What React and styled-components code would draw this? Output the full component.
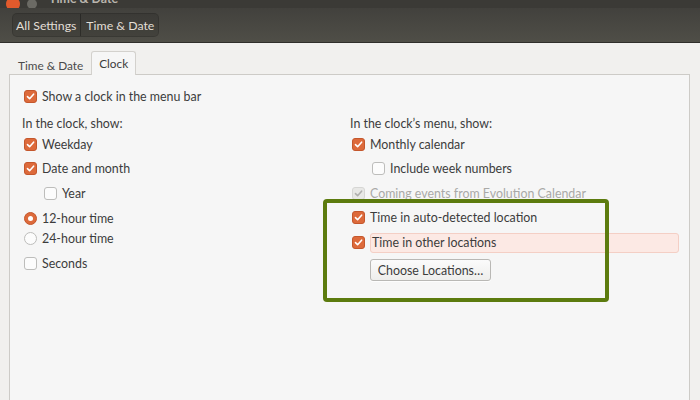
import styled, { createGlobalStyle } from 'styled-components';

const GlobalStyle = createGlobalStyle`
  html, body {
    margin: 0;
    padding: 0;
    background: #f1f0ee;
  }
  body {
    font-family: Lato, "Open Sans", "DejaVu Sans", sans-serif;
    font-size: 12.4px;
    color: #3c3c3c;
  }
`;

const Window = styled.div`
  position: relative;
  width: 700px;
  height: 400px;
  overflow: hidden;
  display: flex;
  flex-direction: column;
  background: #f1f0ee;
`;

const TitleBar = styled.div`
  height: 8px;
  background: #3b3a36;
  display: flex;
  align-items: flex-end;
  gap: 7px;
  padding-left: 6px;
  overflow: hidden;
`;

const WindowDot = styled.span`
  flex: none;
  width: ${props => props.$size}px;
  height: ${props => props.$size}px;
  border-radius: 50%;
  margin-bottom: ${props => props.$drop}px;
  background: ${props => props.$color};
`;

const WindowTitle = styled.span`
  margin-left: 5px;
  margin-bottom: 3px;
  line-height: 12px;
  font-size: 12.4px;
  font-weight: 700;
  color: #b9b5ad;
`;

const HeaderBar = styled.div`
  height: 34px;
  flex: none;
  display: flex;
  align-items: center;
  padding-left: 13px;
  background: linear-gradient(#42413d, #4f4e47);
  border-bottom: 1px solid #2f2e2a;
`;

const Crumbs = styled.div`
  display: flex;
  height: 22px;
  border-radius: 4px;
  background: rgba(0, 0, 0, 0.12);
  box-shadow: 0 0 0 1px rgba(0, 0, 0, 0.25);
`;

const Crumb = styled.span`
  display: flex;
  align-items: center;
  padding: 0 4px 0 ${props => (props.$last ? 5 : 3)}px;
  font-size: 12.3px;
  color: #e2ded6;
  border-left: ${props => (props.$last ? '1px solid rgba(0,0,0,0.3)' : 'none')};
`;

const Body = styled.div`
  flex: 1;
  display: flex;
  flex-direction: column;
  padding: 9px 10px 0 9px;
`;

const Tabs = styled.div`
  display: flex;
  align-items: flex-end;
  height: 22px;
  padding-left: 1px;
`;

const Tab = styled.div`
  display: flex;
  align-items: center;
  height: ${props => (props.$active ? 23 : 20)}px;
  padding: 0 7px;
  font-size: 11.8px;
  color: ${props => (props.$active ? '#3c3c3c' : '#4a4a4a')};
  background: ${props => (props.$active ? '#f6f6f6' : 'transparent')};
  border: 1px solid ${props => (props.$active ? '#d3d1cd' : 'transparent')};
  border-bottom: none;
  border-radius: 3px 3px 0 0;
  margin-bottom: -1px;
  position: relative;
  z-index: 1;
`;

const Panel = styled.div`
  flex: 1;
  background: #f6f6f6;
  border: 1px solid #cdcbc7;
  border-bottom: none;
  padding: 9px 0 0 12px;
`;

const Columns = styled.div`
  display: grid;
  grid-template-columns: 328px 1fr;
`;

const Column = styled.div`
  display: flex;
  flex-direction: column;
`;

const Row = styled.div`
  display: flex;
  align-items: center;
  gap: 5px;
  height: ${props => props.$h || 24}px;
  margin-top: ${props => props.$mt || 0}px;
  padding-left: ${props => (props.$indent ? 22 : 2)}px;
  color: ${props => (props.$disabled ? '#a9a9a7' : '#3c3c3c')};
`;

const SectionLabel = styled.div`
  height: 18px;
  margin-top: 6px;
  display: flex;
  align-items: center;
  color: #3c3c3c;
`;

const Box = styled.span`
  flex: none;
  width: 13px;
  height: 13px;
  box-sizing: border-box;
  border-radius: 3px;
  display: flex;
  align-items: center;
  justify-content: center;
  background: ${props =>
    props.$disabled ? '#e8e8e6' : props.$checked ? '#dd6a3b' : '#fcfcfc'};
  border: 1px solid
    ${props =>
      props.$disabled ? '#d6d6d4' : props.$checked ? '#c4572c' : '#bdbdbb'};
`;

const Radio = styled(Box)`
  border-radius: 50%;
`;

const Dot = styled.span`
  width: 5px;
  height: 5px;
  border-radius: 50%;
  background: #fff;
`;

const Highlight = styled.span`
  flex: 1;
  margin-right: 10px;
  height: 18px;
  display: flex;
  align-items: center;
  padding-left: 1px;
  background: #fce9e4;
  border: 1px solid #f4cfc5;
  border-radius: 3px;
`;

const Button = styled.button`
  align-self: flex-start;
  margin: 4px 0 0 20px;
  height: 22px;
  width: 121px;
  padding: 0;
  font-family: inherit;
  font-size: 12.4px;
  color: #3c3c3c;
  background: linear-gradient(#fbfbfb, #eeeeec);
  border: 1px solid #b9b8b5;
  border-radius: 3px;
  box-shadow: 0 1px 0 rgba(255, 255, 255, 0.8);
`;

const Annotation = styled.div`
  position: absolute;
  left: 323px;
  top: 199px;
  width: 286px;
  height: 103px;
  box-sizing: border-box;
  border: 4px solid #5c7b0e;
  border-radius: 4px;
  pointer-events: none;
`;

const Check = ({ checked, disabled }) => (
  <Box $checked={checked} $disabled={disabled}>
    {(checked || disabled) && (
      <svg width="9" height="9" viewBox="0 0 9 9">
        <path
          d="M1.5 4.6 L3.6 6.7 L7.6 2.2"
          fill="none"
          stroke={disabled ? '#b0b0ae' : '#fff'}
          strokeWidth="1.6"
          strokeLinecap="round"
          strokeLinejoin="round"
        />
      </svg>
    )}
  </Box>
);

const Option = ({ checked, disabled, indent, h, mt, children }) => (
  <Row $indent={indent} $h={h} $mt={mt} $disabled={disabled}>
    <Check checked={checked} disabled={disabled} />
    {children}
  </Row>
);

const RadioOption = ({ checked, h, mt, children }) => (
  <Row $h={h} $mt={mt}>
    <Radio $checked={checked}>{checked && <Dot />}</Radio>
    {children}
  </Row>
);

export default function App() {
  return (
    <Window>
      <GlobalStyle />
      <TitleBar>
        <WindowDot $size={14} $drop={-3} $color="#e25a2c" />
        <WindowDot $size={10} $drop={-1} $color="#6b6a64" />
        <WindowTitle>Time &amp; Date</WindowTitle>
      </TitleBar>
      <HeaderBar>
        <Crumbs>
          <Crumb>All Settings</Crumb>
          <Crumb $last>Time &amp; Date</Crumb>
        </Crumbs>
      </HeaderBar>
      <Body>
        <Tabs>
          <Tab>Time &amp; Date</Tab>
          <Tab $active>Clock</Tab>
        </Tabs>
        <Panel>
          <Option checked>Show a clock in the menu bar</Option>
          <Columns>
            <Column>
              <SectionLabel>In the clock, show:</SectionLabel>
              <Option checked>Weekday</Option>
              <Option checked h={25}>Date and month</Option>
              <Option indent>Year</Option>
              <RadioOption checked h={20} mt={3}>12-hour time</RadioOption>
              <RadioOption h={20}>24-hour time</RadioOption>
              <Option mt={3}>Seconds</Option>
            </Column>
            <Column>
              <SectionLabel>In the clock’s menu, show:</SectionLabel>
              <Option checked>Monthly calendar</Option>
              <Option indent h={25}>Include week numbers</Option>
              <Option disabled>Coming events from Evolution Calendar</Option>
              <Option checked h={25}>Time in auto-detected location</Option>
              <Row $h={25}>
                <Check checked />
                <Highlight>Time in other locations</Highlight>
              </Row>
              <Button>Choose Locations…</Button>
            </Column>
          </Columns>
        </Panel>
      </Body>
      <Annotation />
    </Window>
  );
}
